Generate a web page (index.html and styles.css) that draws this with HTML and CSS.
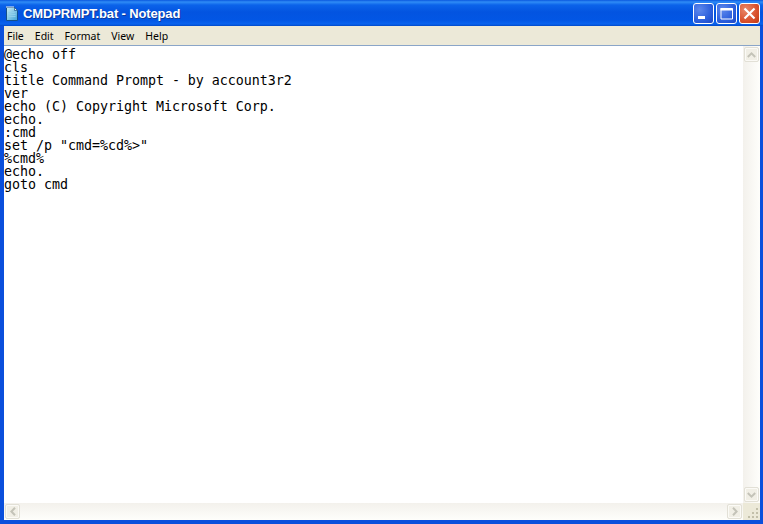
FILE: index.html
```html
<!DOCTYPE html>
<html lang="en">
<head>
<meta charset="utf-8">
<title>CMDPRMPT.bat - Notepad</title>
<link rel="stylesheet" href="styles.css">
</head>
<body>
<div class="window">
  <header class="titlebar">
    <svg class="app-icon" width="14" height="16" viewBox="0 0 14 16">
      <defs><linearGradient id="pg" x1="0" y1="0" x2="1" y2="1"><stop offset="0" stop-color="#c8ecf4"/><stop offset="1" stop-color="#3fa3d8"/></linearGradient></defs>
      <path d="M1.5 2.5h8l3 3v10h-11z" fill="url(#pg)" stroke="#14508a"/>
      <path d="M9.5 2.5v3h3z" fill="#f2fbff" stroke="#14508a" stroke-width=".7"/>
      <path d="M2 1v2M4 1v2M6 1v2M8 1v2" stroke="#e8eef2" stroke-width="1"/>
      <path d="M3.5 7.5h6M3.5 9.5h7M3.5 11.5h7" stroke="#8fd0ec" stroke-width="1"/>
    </svg>
    <span class="title">CMDPRMPT.bat - Notepad</span>
    <div class="controls">
      <button class="ctl ctl-blue" aria-label="Minimize">
        <svg width="21" height="21" viewBox="0 0 21 21"><rect x="5" y="13" width="7" height="3" fill="#fff"/></svg>
      </button>
      <button class="ctl ctl-blue" aria-label="Maximize">
        <svg width="21" height="21" viewBox="0 0 21 21"><path d="M5 5.5h11.5v10.5H5z" fill="none" stroke="#fff"/><rect x="4.5" y="5" width="12" height="2.5" fill="#fff"/></svg>
      </button>
      <button class="ctl ctl-red" aria-label="Close">
        <svg width="21" height="21" viewBox="0 0 21 21"><path d="M5.5 5.5l10 10M15.5 5.5l-10 10" stroke="#fff" stroke-width="2.2"/></svg>
      </button>
    </div>
  </header>
  <nav class="menubar">
    <span class="menu-item">File</span>
    <span class="menu-item">Edit</span>
    <span class="menu-item">Format</span>
    <span class="menu-item">View</span>
    <span class="menu-item">Help</span>
  </nav>
  <main class="client">
    <div class="upper">
      <pre class="editor">@echo off
cls
title Command Prompt - by account3r2
ver
echo (C) Copyright Microsoft Corp.
echo.
:cmd
set /p "cmd=%cd%&gt;"
%cmd%
echo.
goto cmd</pre>
      <div class="vscroll">
        <div class="sbtn"><svg width="9" height="6" viewBox="0 0 9 6"><path d="M.8 5L4.5 1.4 8.2 5" fill="none" stroke="#c4c3b8" stroke-width="2"/></svg></div>
        <div class="sbtn"><svg width="9" height="6" viewBox="0 0 9 6"><path d="M.8 1L4.5 4.6 8.2 1" fill="none" stroke="#c4c3b8" stroke-width="2"/></svg></div>
      </div>
    </div>
    <div class="lower">
      <div class="hscroll">
        <div class="sbtn"><svg width="6" height="9" viewBox="0 0 6 9"><path d="M5 .8L1.4 4.5 5 8.2" fill="none" stroke="#c4c3b8" stroke-width="2"/></svg></div>
        <div class="sbtn"><svg width="6" height="9" viewBox="0 0 6 9"><path d="M1 .8L4.6 4.5 1 8.2" fill="none" stroke="#c4c3b8" stroke-width="2"/></svg></div>
      </div>
      <div class="grip">
        <svg width="14" height="14" viewBox="0 0 14 14"><path d="M10 2h2v2h-2zM6 6h2v2H6zM10 6h2v2h-2zM2 10h2v2H2zM6 10h2v2H6zM10 10h2v2h-2z" fill="#c2bfa9"/></svg>
      </div>
    </div>
  </main>
</div>
</body>
</html>
```
FILE: styles.css
```css
* { box-sizing: border-box; }
html, body { margin: 0; padding: 0; }
body { width: 763px; height: 524px; overflow: hidden; }
.window {
  width: 763px;
  height: 524px;
  display: flex;
  flex-direction: column;
  background: #0a4fdc;
  padding: 0 3px 4px 4px;
}
.titlebar {
  height: 26px;
  margin: 0 -3px 0 -4px;
  padding: 0 3px 0 5px;
  display: flex;
  align-items: center;
  flex: none;
  background: linear-gradient(to bottom, #0a58df 0, #2f8cf6 2px, #0b63ea 5px, #0354e0 12px, #0256e4 20px, #0a63ee 24px, #0048c8 26px);
}
.app-icon { flex: none; margin-right: 4px; }
.title {
  font: bold 13px "Liberation Sans", Arial, sans-serif;
  letter-spacing: -0.14px;
  color: #fff;
  text-shadow: 1px 1px 0 #0f3a9a;
  flex: 1;
}
.controls { display: flex; gap: 2px; }
.ctl {
  width: 21px;
  height: 21px;
  padding: 0;
  border: 1px solid #fff;
  border-radius: 3px;
  display: block;
  overflow: hidden;
}
.ctl svg { display: block; margin: -1px; }
.ctl-blue { background: radial-gradient(circle at 30% 30%, #5d88ec 0, #2c5fdc 60%, #1c46c4 100%); }
.ctl-red { background: radial-gradient(circle at 30% 30%, #e9886a 0, #d9512d 60%, #c03a14 100%); }
.menubar {
  height: 19px;
  flex: none;
  padding-left: 0;
  display: flex;
  align-items: center;
  gap: 0;
  background: #ece9d8;
  color: #000;
}
.menu-item { padding: 0 5.5px; font: 10.5px "Noto Sans", sans-serif; margin-left: 0; }
.menu-item:first-child { margin-left: -2px; padding-left: 5px; }
.client {
  flex: 1;
  min-height: 0;
  display: flex;
  flex-direction: column;
  background: #fff;
  border-top: 1px solid #8aa5c8;
}
.upper { flex: 1; min-height: 0; display: flex; }
.editor {
  flex: 1;
  margin: 0;
  padding: 2px 0 0 0;
  font: 13.33px/13px "DejaVu Sans Mono", monospace;
  letter-spacing: -0.03px;
  color: #000;
}
.vscroll {
  width: 17px;
  flex: none;
  display: flex;
  flex-direction: column;
  justify-content: space-between;
  padding: 1px 1px 1px 1px;
  background: linear-gradient(to right, #f3f1ec, #fefefb);
}
.hscroll {
  flex: 1;
  height: 17px;
  display: flex;
  justify-content: space-between;
  padding: 1px;
  background: linear-gradient(to bottom, #f3f1ec, #fefefb);
}
.lower { display: flex; flex: none; }
.sbtn {
  width: 15px;
  height: 15px;
  flex: none;
  display: flex;
  align-items: center;
  justify-content: center;
  background: #f1efe6;
  border: 1px solid #e2e0d6;
  border-radius: 2px;
  box-shadow: inset 0 0 0 1px #fbfaf6;
}
.grip { width: 17px; height: 17px; flex: none; background: #ece9d8; }
.grip svg { display: block; margin: 3px 0 0 3px; }
```
